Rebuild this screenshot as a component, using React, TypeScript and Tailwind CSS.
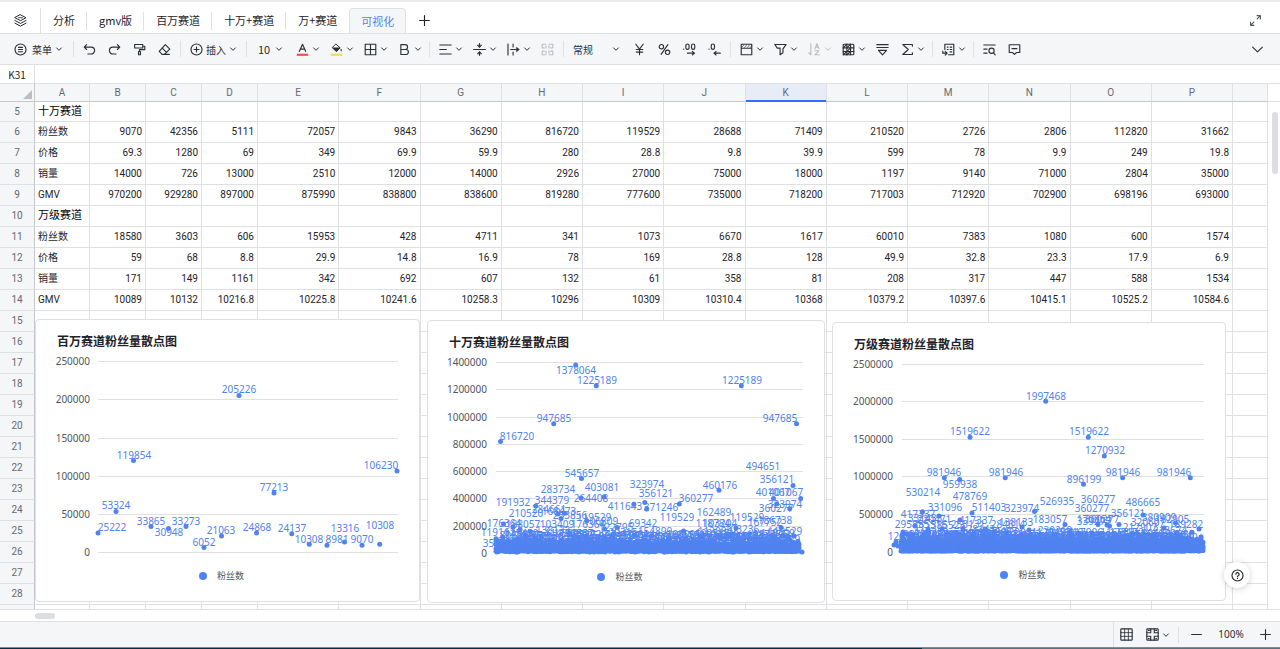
import { ReactNode, useState } from "react";

const tabs = ["分析", "gmv版", "百万赛道", "十万+赛道", "万+赛道", "可视化"];
const columns = "ABCDEFGHIJKLMNOP".split("");
const emptyRows = [15, 16, 17, 18, 19, 20, 21, 22, 23, 24, 25, 26, 27, 28, 29];

type Row = { id: number; label: string; heading?: boolean; values: string[] };

const rows: Row[] = [
    { id: 5, label: "十万赛道", heading: true, values: [] },
    { id: 6, label: "粉丝数", values: "9070 42356 5111 72057 9843 36290 816720 119529 28688 71409 210520 2726 2806 112820 31662".split(" ") },
    { id: 7, label: "价格", values: "69.3 1280 69 349 69.9 59.9 280 28.8 9.8 39.9 599 78 9.9 249 19.8".split(" ") },
    { id: 8, label: "销量", values: "14000 726 13000 2510 12000 14000 2926 27000 75000 18000 1197 9140 71000 2804 35000".split(" ") },
    { id: 9, label: "GMV", values: "970200 929280 897000 875990 838800 838600 819280 777600 735000 718200 717003 712920 702900 698196 693000".split(" ") },
    { id: 10, label: "万级赛道", heading: true, values: [] },
    { id: 11, label: "粉丝数", values: "18580 3603 606 15953 428 4711 341 1073 6670 1617 60010 7383 1080 600 1574".split(" ") },
    { id: 12, label: "价格", values: "59 68 8.8 29.9 14.8 16.9 78 169 28.8 128 49.9 32.8 23.3 17.9 6.9".split(" ") },
    { id: 13, label: "销量", values: "171 149 1161 342 692 607 132 61 358 81 208 317 447 588 1534".split(" ") },
    { id: 14, label: "GMV", values: "10089 10132 10216.8 10225.8 10241.6 10258.3 10296 10309 10310.4 10368 10379.2 10397.6 10415.1 10525.2 10584.6".split(" ") },
];

type Label = [text: string, x: number, y: number];
type Dot = [x: number, y: number];

type ChartData = {
    title: string;
    left: number;
    top: number;
    width: number;
    plotHeight: number;
    ticks: [string, number][];
    axisX: number;
    x0: number;
    x1: number;
    labels: Label[];
    dots: Dot[];
};

// small seeded generator so the dense band is the same on every render
function seeded(seed: number): () => number {
    let state = seed;
    return () => {
        state = (state * 1664525 + 1013904223) % 4294967296;
        return state / 4294967296;
    };
}

function denseDots(seed: number, x0: number, x1: number, top: number, bottom: number): Dot[] {
    const random = seeded(seed);
    const dots: Dot[] = [];
    for (let x = x0; x <= x1; x += 1) {
        for (let y = top + 3; y <= bottom; y += 3) {
            dots.push([x, Math.min(bottom, y + random() * 2)]);
        }
        if (random() > 0.5) dots.push([x, top + random() * 3]);
        if (random() > 0.85) dots.push([x, top - random() * 6]);
    }
    return dots;
}

function denseLabels(seed: number, x0: number, x1: number, top: number, bottom: number, step: number): Label[] {
    const random = seeded(seed);
    const labels: Label[] = [];
    for (let x = x0; x <= x1; x += step) {
        const depth = Math.sqrt(random());
        const value = Math.round(14000 + (1 - depth) * 120000 + random() * 20000);
        labels.push([String(value), x + random() * 5, top + depth * (bottom - top)]);
    }
    return labels;
}

const charts: ChartData[] = [
    {
        title: "百万赛道粉丝量散点图",
        left: 35, top: 319, width: 385, plotHeight: 208,
        ticks: [["250000", 361], ["200000", 399], ["150000", 438], ["100000", 476], ["50000", 514], ["0", 552]],
        axisX: 90, x0: 98, x1: 398,
        labels: [
            ["25222", 112, 527], ["53324", 116, 505], ["119854", 134, 455], ["33865", 151, 521], ["30948", 169, 532],
            ["33273", 186, 521], ["6052", 204, 542], ["21063", 221, 530], ["205226", 239, 389], ["24868", 257, 527],
            ["77213", 274, 487], ["24137", 292, 528], ["10308", 309, 539], ["8981", 337, 539], ["13316", 345, 528],
            ["9070", 362, 539], ["10308", 380, 525], ["106230", 381, 465],
        ],
        dots: [
            [98, 533], [116, 511.5], [133.5, 460.5], [151, 526.5], [168.5, 528.5], [186, 526.5], [204, 547.5], [221.5, 536],
            [239, 395.5], [256.5, 533], [274, 493], [291.7, 533.7], [309.3, 544.3], [327, 545.3], [344.5, 542], [362, 545.3],
            [379.7, 544.3], [397, 471],
        ],
    },
    {
        title: "十万赛道粉丝量散点图",
        left: 427, top: 320, width: 398, plotHeight: 208,
        ticks: [["1400000", 362], ["1200000", 389], ["1000000", 417], ["800000", 444], ["600000", 471], ["400000", 498], ["200000", 526], ["0", 553]],
        axisX: 487, x0: 496, x1: 803,
        labels: [
            ["1378064", 576, 370], ["1225189", 597, 380], ["1225189", 742, 380], ["947685", 554, 418], ["947685", 780, 418],
            ["816720", 517, 436], ["545657", 582, 473], ["403081", 602, 487], ["283734", 558, 489], ["264408", 591, 498],
            ["344379", 552, 500], ["191932", 513, 502], ["284661", 549, 509], ["168473", 559, 511], ["411643", 625, 506],
            ["210520", 526, 513], ["253856", 570, 515], ["119529", 594, 517], ["106809", 601, 521], ["176364", 504, 523],
            ["188057", 523, 524], ["103409", 557, 524], ["176364", 588, 524], ["119162", 498, 532], ["138133", 553, 530],
            ["135872", 584, 534], ["122795", 616, 527], ["35469", 497, 543], ["494651", 763, 466], ["356121", 777, 479],
            ["460176", 720, 485], ["323974", 647, 484], ["356121", 656, 493], ["360277", 696, 498], ["371246", 661, 507],
            ["401067", 773, 492], ["401067", 786, 492], ["323974", 785, 504], ["360277", 776, 508], ["119529", 677, 517],
            ["162489", 714, 512], ["119529", 747, 517], ["118784", 713, 523], ["103204", 720, 523], ["167752", 765, 522],
            ["186738", 775, 520], ["69342", 643, 523], ["103236", 742, 529], ["119529", 785, 531], ["112084", 715, 531],
            ["154899", 655, 531], ["120315", 620, 532], ["108733", 764, 534],
        ],
        dots: [
            [575.7, 365], [596.3, 385.7], [741.3, 385.7], [553.7, 423.7], [796.5, 423.7], [500.5, 441.5], [581.5, 478.5],
            [604, 497], [581, 498], [535.7, 506], [633.9, 504.3], [644.8, 502.5], [557.7, 514], [564.5, 513.3], [561, 518.5],
            [503.5, 524], [513, 527], [520, 529.6], [530, 531.6], [586.7, 520.7], [604.5, 529], [617, 527.5], [569.5, 534],
            [793, 485.5], [719, 490.3], [679.3, 504], [646.7, 509], [773.5, 498.5], [800.7, 498.5], [776.7, 504],
            [789.7, 508.7], [781, 527.5], [736, 528], [683.5, 531], [717, 536], [731, 537], [789, 537], [802, 552],
            ...denseDots(7, 496, 799, 541, 552),
        ],
    },
    {
        title: "万级赛道粉丝量散点图",
        left: 832, top: 322, width: 394, plotHeight: 204,
        ticks: [["2500000", 364], ["2000000", 401], ["1500000", 439], ["1000000", 476], ["500000", 514], ["0", 552]],
        axisX: 893, x0: 902, x1: 1204,
        labels: [
            ["1997468", 1046, 396], ["1519622", 970, 431], ["1519622", 1089, 431], ["1270932", 1105, 450], ["981946", 944, 472],
            ["981946", 1006, 472], ["981946", 1123, 472], ["981946", 1174, 472], ["959938", 960, 484], ["896199", 1084, 479],
            ["530214", 923, 492], ["478769", 970, 496], ["331096", 945, 507], ["511403", 989, 507], ["323974", 1022, 508],
            ["526935", 1057, 501], ["360277", 1098, 499], ["360277", 1092, 508], ["486665", 1143, 502], ["356121", 1128, 513],
            ["417337", 918, 514], ["331433", 925, 518], ["220471", 934, 519], ["417337", 976, 520], ["183057", 1050, 519],
            ["138133", 1016, 522], ["284614", 1008, 524], ["295855", 912, 524], ["285516", 930, 524], ["385523", 948, 525],
            ["253131", 968, 524], ["170864", 1094, 519], ["339277", 1094, 521], ["360277", 1102, 519], ["320607", 1148, 522],
            ["380909", 1159, 517], ["182905", 1172, 519], ["189282", 1186, 524], ["230219", 1055, 530], ["120540", 905, 536],
            ["212907", 1140, 527], ["128143", 978, 529], ["213674", 1170, 530],
        ],
        dots: [
            [1045.7, 401.3], [970, 437.3], [1088.3, 437.3], [1104.3, 456], [944.3, 477.7], [1005.3, 477.7], [1122.6, 477.7],
            [1190.3, 477.7], [959.7, 479.5], [1083.5, 484.3], [972, 513], [1034.5, 511.5], [1143, 515], [922.5, 511.7],
            [939, 516], [1065, 524.5], [1098, 524.5], [1107, 525], [1119, 524.5], [1109.5, 526], [1175.5, 523], [1164, 528],
            [960, 520], [915, 526], [928, 529], [942, 529], [963, 529], [985, 529], [1022, 527], [1029, 530], [1199, 529],
            [908, 534], [894, 545], [896, 542], [898, 546],
            ...denseDots(31, 901, 1203, 538, 551),
        ],
    },
];

// short labels that pile up above the x axis of the two crowded charts
const crowds: Label[][] = [
    [],
    [...denseLabels(11, 512, 784, 531, 540, 5), ...denseLabels(13, 504, 784, 538, 546, 6)],
    [...denseLabels(23, 914, 1184, 530, 538, 4), ...denseLabels(29, 910, 1184, 536, 545, 6)],
];

function Icon({ children, size = 13 }: { children: ReactNode; size?: number }): ReactNode {
    return (
        <svg
            width={size}
            height={size}
            viewBox="0 0 16 16"
            fill="none"
            stroke="currentColor"
            strokeWidth="1.4"
            strokeLinecap="round"
            strokeLinejoin="round"
            className="shrink-0"
            aria-hidden="true"
        >
            {children}
        </svg>
    );
}

function Chevron(): ReactNode {
    return (
        <svg width="8" height="8" viewBox="0 0 8 8" fill="none" stroke="currentColor" strokeWidth="1" className="shrink-0" aria-hidden="true">
            <path d="M1.3 2.6 4 5.3 6.7 2.6" />
        </svg>
    );
}

function Separator(): ReactNode {
    return <span className="mx-[3px] h-4 w-px shrink-0 bg-[#dee0e3]" />;
}

function Tool({ name, children, menu = false, disabled = false }: { name: string; children: ReactNode; menu?: boolean; disabled?: boolean }): ReactNode {
    return (
        <button
            type="button"
            aria-label={name}
            aria-haspopup={menu ? "menu" : undefined}
            disabled={disabled}
            className={`flex h-6 shrink-0 items-center gap-[3px] rounded pl-1.5 hover:bg-[#e8e9eb] disabled:text-[#bbbfc4] ${menu ? "pr-1" : "pr-1.5"}`}
        >
            <Icon>{children}</Icon>
            {menu && <Chevron />}
        </button>
    );
}

function TabBar(): ReactNode {
    const [active, setActive] = useState<string>("可视化");

    return (
        <nav className="flex h-[33px] shrink-0 items-end border-t-2 border-[#ebecee] bg-white text-[11px]">
            <button type="button" aria-label="工作表列表" className="flex h-[25px] w-10 items-center justify-center">
                <Icon>
                    <path d="M8 1 14.8 4.600 8 8.200 1.200 4.600Z" strokeWidth="1.200" />
                    <path d="M1.200 8 8 11.600 14.800 8M1.200 11.300 8 14.900l6.800-3.600" strokeWidth="1.200" />
                    <path d="M5.500 4.600h5" strokeWidth="1" />
                </Icon>
            </button>
            <span className="h-[25px] w-px bg-[#dee0e3]" />
            {tabs.map((tab: string, index: number) => (
                <div key={tab} className="flex h-[25px] items-center">
                    <button
                        type="button"
                        onClick={() => setActive(tab)}
                        className={
                            tab === active
                                ? "h-[25px] rounded-t border border-b-0 border-[#dee0e3] bg-[#f5f6f7] px-[11px] text-[#4e83fd]"
                                : "h-[25px] px-3 text-[#1f2329]"
                        }
                    >
                        {tab}
                    </button>
                    {index < tabs.length - 2 && <span className="-ml-px h-[18px] w-px bg-[#dee0e3]" />}
                </div>
            ))}
            <button type="button" aria-label="新建工作表" className="flex h-[25px] w-9 items-center justify-center">
                <Icon>
                    <path d="M8 2v12M2 8h12" />
                </Icon>
            </button>
            <button type="button" aria-label="全屏" className="mr-[18px] ml-auto flex h-[25px] items-center text-[#51565d]">
                <Icon>
                    <path d="M10 6l4-4M10 2h4v4M6 10l-4 4M2 10v4h4" />
                </Icon>
            </button>
        </nav>
    );
}

function Toolbar(): ReactNode {
    return (
        <div role="toolbar" className="flex h-8 shrink-0 items-center border-y border-[#dee0e3] bg-[#f5f6f7] pl-2 text-[10px] text-[#2b2f36]">
            <button type="button" className="flex h-6 items-center gap-[3px] pr-[7px] pl-1.5">
                <Icon>
                    <circle cx="8" cy="8" r="6.8" />
                    <path d="M5.5 5.3h5M5.5 8h5M5.5 10.7h5" />
                </Icon>
                <span className="pl-0.5">菜单</span>
                <Chevron />
            </button>
            <Separator />
            <Tool name="撤销">
                <path d="M4.5 2 1.5 5l3 3M2 5h8a4.3 4.3 0 0 1 0 8.6H6" />
            </Tool>
            <Tool name="重做">
                <path d="m11.5 2 3 3-3 3M14 5H6a4.3 4.3 0 0 0 0 8.6h4" />
            </Tool>
            <Tool name="格式刷">
                <path d="M2 1.8h10v4.4H2ZM12 4h2.5v4.2H8v2.3M6.8 10.500h2.400v4H6.800Z" />
            </Tool>
            <Tool name="清除格式">
                <path d="M9 2l5.5 5.5L7.8 14H5l-3.5-3.7ZM5 6l5.5 5.500M7.500 14H14" />
            </Tool>
            <Separator />
            <button type="button" className="flex h-6 items-center gap-[3px] px-1.5">
                <Icon>
                    <circle cx="8" cy="8" r="6.8" />
                    <path d="M8 5v6M5 8h6" />
                </Icon>
                <span>插入</span>
                <Chevron />
            </button>
            <Separator />
            <label className="relative flex h-6 items-center">
                <select aria-label="字号" defaultValue="10" className="w-10 appearance-none bg-transparent pl-2 text-[11px] outline-none">
                    <option>10</option>
                    <option>12</option>
                </select>
                <span className="pointer-events-none absolute right-[7px]"><Chevron /></span>
            </label>
            <Tool name="字体颜色" menu>
                <path d="M4 10.500 8 1.500l4 9M5.500 7.500h5" />
                <path d="M1 14.500h14" stroke="#f54a45" strokeWidth="2.600" strokeLinecap="butt" />
            </Tool>
            <Tool name="填充颜色" menu>
                <path d="M7.500 1.500 12.500 6 8 10.500 3 6Z" strokeWidth="1.200" />
                <path d="M4 6h8L8 10Z" fill="currentColor" strokeWidth="1" />
                <path d="M13.800 8v1.500" />
                <path d="M1 14.500h14" stroke="#f1dc4e" strokeWidth="2.600" strokeLinecap="butt" />
            </Tool>
            <Tool name="边框" menu>
                <path d="M1.500 1.500h13v13h-13ZM8 1.500v13M1.500 8h13" />
            </Tool>
            <Tool name="加粗" menu>
                <path d="M3.500 2h5.300a3 3 0 0 1 0 6H3.500ZM3.500 8h6.200a3 3 0 0 1 0 6.200H3.500Z" />
            </Tool>
            <Separator />
            <Tool name="水平对齐" menu>
                <path d="M1 2.500h14M1 8h8M1 13.500h14" />
            </Tool>
            <Tool name="垂直对齐" menu>
                <path d="M.8 8h14.400M8 .8V4M8 15.200V12" />
                <path d="M5.500 3 8 5.800 10.500 3ZM5.500 13 8 10.200l2.500 2.800Z" fill="currentColor" strokeWidth=".8" />
            </Tool>
            <Tool name="换行" menu>
                <path d="M1.200 1.200v13.600M7.500 1.200v3.600M7.500 11.200v3.600M4.500 8h8" />
                <path d="M12 5.500 15.200 8 12 10.500Z" fill="currentColor" strokeWidth=".8" />
            </Tool>
            <Tool name="合并单元格" disabled>
                <path d="M6 1.500H1.500V6H4M10 1.500h4.500V6H12M6 14.500H1.500V10H4M10 14.500h4.500V10H12M6.200 3.500V6M9.800 3.500V6M6.200 10v2.500M9.800 10v2.500" />
            </Tool>
            <Separator />
            <label className="relative flex h-6 items-center">
                <select aria-label="数字格式" defaultValue="常规" className="w-[60px] appearance-none bg-transparent pl-1.5 outline-none">
                    <option>常规</option>
                    <option>数字</option>
                </select>
                <span className="pointer-events-none absolute right-[7px]"><Chevron /></span>
            </label>
            <Tool name="货币">
                <path d="M3.500 1.500 8 7.500l4.500-6M8 7.500v7M4 8h8M4 11.200h8" />
            </Tool>
            <Tool name="百分比">
                <circle cx="4.200" cy="4.600" r="2.700" />
                <circle cx="11.800" cy="11.400" r="2.700" />
                <path d="M12.200 2 3.800 14" />
            </Tool>
            <Tool name="增加小数位">
                <rect x="3.500" y="1.200" width="4" height="6.600" rx="2" />
                <rect x="10.500" y="1.200" width="4" height="6.600" rx="2" />
                <path d="M.8 7.600h.1M5.500 12.500h8M11.500 10.300l2.700 2.200-2.700 2.200" />
            </Tool>
            <Tool name="减少小数位">
                <rect x="4" y="1.200" width="4" height="6.600" rx="2" />
                <path d="M1.200 7.600h.1M7.500 12.500h7.700M10 10.300l-2.700 2.200 2.700 2.200" />
            </Tool>
            <Separator />
            <Tool name="条件格式" menu>
                <path d="M1.500 1.500h13v13h-13ZM1.500 6.500h13" />
                <path d="M2 5.500 5 2M5.500 5.500l3-3.500M9 5.500 12 2M12.500 5.500l1.500-2" strokeWidth=".8" />
            </Tool>
            <Tool name="筛选" menu>
                <path d="M1 1.800h14l-4 5.400V12l-3.500 2.500V7.200M1 1.800l3 4.500h3.500" />
            </Tool>
            <Tool name="排序" menu disabled>
                <path d="M3.500 1v13.500M1 12l2.500 2.500M8.500 7l2.500-6 2.500 6M9.300 5h3.400M8.500 9.500h5l-5 5h5.500" />
            </Tool>
            <Tool name="冻结" menu>
                <rect x="1.500" y="1.500" width="13" height="13" rx="1" />
                <path d="M6 1.500v13M10.500 1.500v13M1.500 6h13M1.500 10.500h13" />
                <path d="M6 6 10.500 1.500M6 10.500 10.500 6M6 14.500l4.500-4M1.500 6 6 1.500M1.500 14.500 6 10.500" />
            </Tool>
            <Tool name="下拉列表">
                <path d="M1 2h14M1 5.500h14M3 9h10l-5 5.500Z" />
            </Tool>
            <Tool name="求和" menu>
                <path d="M14 4V1.800H2.200L9 8l-6.800 6.200H14V12" />
            </Tool>
            <Separator />
            <Tool name="数据透视" menu>
                <path d="M3.500 8V1.500h11v13H8M6.500 5h1M10 5h2M6.500 8h1M10 8h2M10 11h2M1 10v2.500h5M4 10.200l2.400 2.300L4 14.800" />
            </Tool>
            <Separator />
            <Tool name="查找替换">
                <path d="M1 2.500h14M1 7.500h4M1 12.500h4" />
                <circle cx="10.500" cy="9.500" r="3.200" />
                <path d="m13 12 2 2.500" />
            </Tool>
            <Tool name="评论">
                <path d="M1.500 2.200h13v9.500h-4L8 14l-2.500-2.300h-4ZM5 7h6" />
            </Tool>
            <button type="button" aria-label="收起工具栏" className="mr-4 ml-auto flex h-6 items-center">
                <Icon>
                    <path d="m2 5 6 6 6-6" />
                </Icon>
            </button>
        </div>
    );
}

function FormulaBar(): ReactNode {
    return (
        <div className="flex h-[18px] shrink-0 bg-white text-[10px]">
            <span className="flex w-[35px] items-center justify-center border-r border-[#dee0e3]">K31</span>
            <input aria-label="编辑栏" className="flex-1 px-2 outline-none" />
        </div>
    );
}

function Grid(): ReactNode {
    const cell = "border-r border-b border-[#dee0e3] p-0";

    return (
        <table className="w-full table-fixed border-separate border-spacing-0 font-[Roboto,'Noto_Sans_CJK_SC',sans-serif] text-[10px] leading-4 text-[#1f2329]">
            <colgroup>
                <col className="w-[35px]" />
                <col className="w-[55px]" />
                <col className="w-14" />
                <col className="w-14" />
                <col className="w-14" />
                {columns.slice(4).map((column: string) => <col key={column} />)}
                <col className="w-[35px]" />
            </colgroup>
            <thead>
                <tr className="h-[19px] bg-[#f5f6f7] text-[#646a73]">
                    <td className="border-t border-r border-b border-[#dee0e3] border-r-[#c4c7cc] border-b-[#c4c7cc] p-0">
                        <svg width="9" height="9" viewBox="0 0 9 9" className="mt-1 mr-0.5 ml-auto" aria-hidden="true">
                            <path d="M9 0v9H0Z" fill="#bbbfc4" />
                        </svg>
                    </td>
                    {columns.map((column: string) => (
                        <th
                            key={column}
                            scope="col"
                            className={
                                column === "K"
                                    ? "border-t border-r border-b border-[#dee0e3] border-b-[#3370ff] bg-[#e8ecf6] p-0 font-normal shadow-[inset_0_-1px_0_#3370ff]"
                                    : "border-t border-r border-b border-[#dee0e3] border-b-[#c4c7cc] p-0 font-normal"
                            }
                        >
                            {column}
                        </th>
                    ))}
                    <td className="border-t border-r border-b border-[#dee0e3] border-b-[#c4c7cc] p-0" />
                </tr>
            </thead>
            <tbody>
                {rows.map((row: Row) => (
                    <tr key={row.id} className={row.id === 5 ? "h-5" : "h-[21px]"}>
                        <th scope="row" className="border-r border-b border-[#dee0e3] border-r-[#c4c7cc] bg-[#f5f6f7] p-0 font-normal text-[#646a73]">{row.id}</th>
                        <td className={`${cell} pl-[3px] whitespace-nowrap ${row.heading ? "text-[11px] text-black" : ""}`}>{row.label}</td>
                        {columns.slice(1).map((column: string, index: number) => (
                            <td key={column} className={`${cell} pr-[3px] text-right`}>{row.values[index]}</td>
                        ))}
                        <td className={cell} />
                    </tr>
                ))}
                {emptyRows.map((id: number) => (
                    <tr key={id} className="h-[21px]">
                        <th scope="row" className="border-r border-b border-[#dee0e3] border-r-[#c4c7cc] bg-[#f5f6f7] p-0 font-normal text-[#646a73]">{id < 29 ? id : ""}</th>
                        {columns.map((column: string) => <td key={column} className={cell} />)}
                        <td className={cell} />
                    </tr>
                ))}
            </tbody>
        </table>
    );
}

// Charts float over the cells. All their coordinates are in sheet pixels.
function Chart({ chart, crowd }: { chart: ChartData; crowd: Label[] }): ReactNode {
    const { title, left, top, width, plotHeight, ticks, axisX, x0, x1, labels, dots } = chart;

    return (
        <figure
            className="absolute rounded border border-[#dee0e3] bg-white pb-[9px]"
            style={{ left, top: top - 83, width }}
        >
            <figcaption className="h-[31px] pt-[11px] pl-[21px] text-[12px] leading-5 font-bold text-[#1f2329]">{title}</figcaption>
            <svg
                width={width - 2}
                height={plotHeight}
                viewBox={`${left + 1} ${top + 32} ${width - 2} ${plotHeight}`}
                className="block overflow-visible font-['Noto_Sans',sans-serif] text-[10px]"
                role="img"
                aria-label={title}
            >
                {ticks.map(([text, y]) => (
                    <g key={text}>
                        <path d={`M${x0} ${y + 0.5}H${x1}`} stroke="#dee0e3" />
                        <text x={axisX} y={y + 4} textAnchor="end" fill="#51565d">{text}</text>
                    </g>
                ))}
                <g fill="#5083f0">
                    {dots.map(([x, y], index) => <circle key={index} cx={x} cy={y} r="2.5" />)}
                </g>
                <g fill="#5083f0" textAnchor="middle">
                    {[...labels, ...crowd].map(([text, x, y], index) => <text key={index} x={x} y={y + 4}>{text}</text>)}
                </g>
            </svg>
            <div className="flex h-[33px] items-center justify-center gap-2.5 pr-3 text-[9px] text-[#51565d]">
                <span className="size-2 rounded-full bg-[#4e83fd]" />
                粉丝数
            </div>
        </figure>
    );
}

function StatusBar(): ReactNode {
    return (
        <footer className="flex h-[26px] shrink-0 items-center justify-end border-t border-[#dee0e3] bg-[#f5f6f7] text-[10px]">
            <div className="flex h-full items-center border-l border-[#dee0e3] pl-1.5 text-[#2b2f36]">
                <button type="button" aria-label="网格线" className="flex w-[26px] items-center">
                    <Icon>
                        <rect x="1" y="1" width="14" height="14" rx="1" />
                        <path d="M5.700 1v14M10.300 1v14M1 5.700h14M1 10.300h14" strokeWidth="1" />
                    </Icon>
                </button>
                <button type="button" aria-label="阅读模式" className="flex items-center gap-[3px]">
                    <Icon>
                        <rect x="1" y="1" width="14" height="14" rx="1" />
                        <path d="M5.800 1v4.800H1M10.200 1v4.800H15M5.800 15v-4.800H1M10.200 15v-4.800H15" />
                        <path d="M3 3h1M12 3h1M3 13h1M12 13h1" />
                    </Icon>
                    <Chevron />
                </button>
                <span className="mx-2 h-4 w-px bg-[#dee0e3]" />
                <button type="button" aria-label="缩小" className="flex w-6 items-center pl-[3px]">
                    <Icon>
                        <path d="M2 8h12" />
                    </Icon>
                </button>
                <button type="button" className="w-10 text-center font-['Noto_Sans',sans-serif]">100%</button>
                <button type="button" aria-label="放大" className="flex w-[29px] items-center justify-center">
                    <Icon>
                        <path d="M8 2v12M2 8h12" />
                    </Icon>
                </button>
            </div>
        </footer>
    );
}

export default function App(): ReactNode {
    return (
        <div className="flex h-screen flex-col overflow-hidden bg-white font-['Noto_Sans_CJK_SC',sans-serif] text-[#1f2329]">
            <TabBar />
            <Toolbar />
            <FormulaBar />
            <main className="flex min-h-0 flex-1">
                <div className="relative min-w-0 flex-1 overflow-hidden">
                    <Grid />
                    {charts.map((chart: ChartData, index: number) => (
                        <Chart key={chart.title} chart={chart} crowd={crowds[index]} />
                    ))}
                </div>
                <div className="w-3 shrink-0 border-t border-[#dee0e3]">
                    <div className="mt-[17px] h-px bg-[#dee0e3]" />
                    <div className="mt-2.5 ml-1 h-[62px] w-1.5 rounded-full bg-[#dcdee1]" />
                </div>
            </main>
            <div className="flex h-3 shrink-0 items-center border-t border-[#dee0e3] pl-[35px]">
                <div className="h-1.5 w-5 rounded-full bg-[#dcdee1]" />
            </div>
            <StatusBar />
            <div className="flex h-0.5 shrink-0 border-t border-[#4a9bd0]">
                <div className="w-[72%] bg-[#0a2a45]" />
                <div className="flex-1 bg-[#5c6f80]" />
            </div>
            <button
                type="button"
                aria-label="帮助"
                className="fixed right-[30px] bottom-[61px] flex size-[26px] items-center justify-center rounded-full bg-white shadow-[0_1px_6px_rgba(31,35,41,0.2)]"
            >
                <Icon>
                    <circle cx="8" cy="8" r="6.8" />
                    <path d="M6 6.500a2 2 0 1 1 2.800 1.800c-.5.2-.8.5-.8 1.200M8 11.600v.1" />
                </Icon>
            </button>
        </div>
    );
}
